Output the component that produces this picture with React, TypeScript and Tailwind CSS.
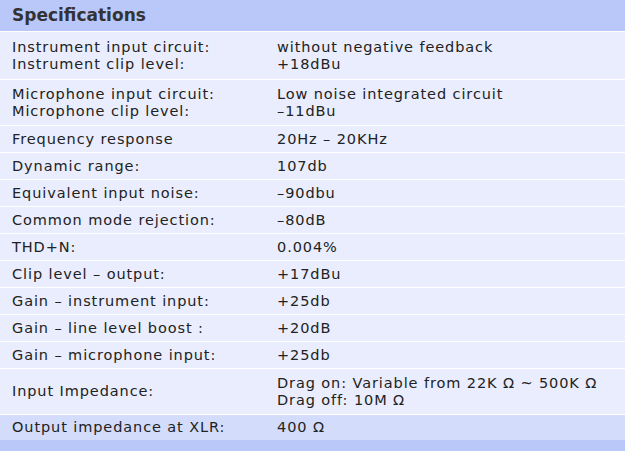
const rows: { label: string[]; value: string[]; h: string; tone?: "dark" }[] = [
  {
    label: ["Instrument input circuit:", "Instrument clip level:"],
    value: ["without negative feedback", "+18dBu"],
    h: "h-[48px] border-b",
  },
  {
    label: ["Microphone input circuit:", "Microphone clip level:"],
    value: ["Low noise integrated circuit", "\u201311dBu"],
    h: "h-[46px] border-b",
  },
  { label: ["Frequency response"], value: ["20Hz \u2013 20KHz"], h: "h-[27px] border-b" },
  { label: ["Dynamic range:"], value: ["107db"], h: "h-[27px] border-b" },
  { label: ["Equivalent input noise:"], value: ["\u201390dbu"], h: "h-[27px] border-b" },
  { label: ["Common mode rejection:"], value: ["\u201380dB"], h: "h-[27px] border-b" },
  { label: ["THD+N:"], value: ["0.004%"], h: "h-[27px] border-b" },
  { label: ["Clip level \u2013 output:"], value: ["+17dBu"], h: "h-[27px] border-b" },
  { label: ["Gain \u2013 instrument input:"], value: ["+25db"], h: "h-[27px] border-b" },
  { label: ["Gain \u2013 line level boost :"], value: ["+20dB"], h: "h-[27px] border-b" },
  { label: ["Gain \u2013 microphone input:"], value: ["+25db"], h: "h-[27px] border-b" },
  {
    label: ["Input Impedance:"],
    value: ["Drag on: Variable from 22K \u03a9 ~ 500K \u03a9", "Drag off: 10M \u03a9"],
    h: "h-[46px] border-b",
  },
  { label: ["Output impedance at XLR:"], value: ["400 \u03a9"], h: "h-[25px]", tone: "dark" },
];

export default function App() {
  return (
    <div
      className="w-[625px] h-[451px] bg-[#b9c8f9] flex flex-col text-[#222] overflow-hidden"
      style={{ fontFamily: '"DejaVu Sans", "Lucida Grande", sans-serif' }}
    >
      <div className="h-[32px] shrink-0 flex items-center px-3 border-b border-white">
        <h2 className="text-[17px] font-bold text-[#333]">Specifications</h2>
      </div>
      {rows.map((r, i) => (
        <div
          key={i}
          className={
            "shrink-0 grid grid-cols-[265px_1fr] items-center pl-3 text-[14.5px] leading-[17px] tracking-[0.9px] border-white " +
            r.h +
            " " +
            (r.tone === "dark" ? "bg-[#d3dcfb]" : "bg-[#e9edfd]")
          }
        >
          <div className="flex flex-col">
            {r.label.map((l) => (
              <span key={l}>{l}</span>
            ))}
          </div>
          <div className="flex flex-col">
            {r.value.map((v) => (
              <span key={v}>{v}</span>
            ))}
          </div>
        </div>
      ))}
    </div>
  );
}
